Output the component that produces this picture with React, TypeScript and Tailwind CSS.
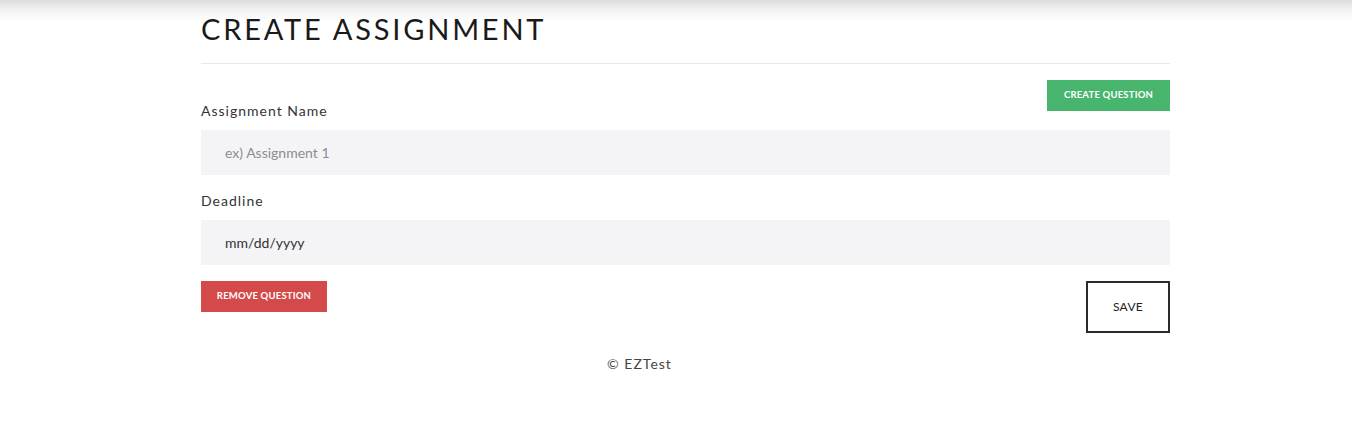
import React from "react";

export default function App() {
  return (
    <div
      className="min-h-[443px] w-full bg-[linear-gradient(to_bottom,#dcdcdc_0px,#f3f3f3_10px,#ffffff_22px)] text-[#1d1d1f]"
      style={{ fontFamily: "Lato, 'Open Sans', sans-serif" }}
    >
      <div className="ml-[201px] w-[969px] pt-[11px]">
        <h1 className="text-[29px] leading-[36px] font-normal tracking-[2.8px] text-[#1a1a1a] pb-[16px] border-b border-[#e9e9e9]">
          CREATE ASSIGNMENT
        </h1>
        <div className="flex justify-end pt-[16px]">
          <button className="h-[31px] w-[123px] bg-[#48b56e] text-white text-[9.5px] font-bold tracking-[0.2px]">
            CREATE QUESTION
          </button>
        </div>
        <div className="-mt-[10px]">
          <label className="block text-[14px] leading-[20px] tracking-[1px] text-[#333] mb-[9px]">
            Assignment Name
          </label>
          <input
            className="block h-[45px] w-full bg-[#f4f4f6] px-[24px] text-[14px] text-[#333] placeholder:text-[#8b8d91] outline-none"
            placeholder="ex) Assignment 1"
          />
        </div>
        <div className="mt-[16px]">
          <label className="block text-[14px] leading-[20px] tracking-[1px] text-[#333] mb-[9px]">
            Deadline
          </label>
          <div className="flex h-[45px] w-full items-center bg-[#f4f4f6] px-[24px] text-[14px] text-[#333]">
            mm/dd/yyyy
          </div>
        </div>
        <div className="mt-[16px] flex items-start justify-between">
          <button className="h-[31px] w-[126px] bg-[#d34a4a] text-white text-[9.5px] font-bold tracking-[0.2px]">
            REMOVE QUESTION
          </button>
          <button className="h-[52px] w-[84px] border-2 border-[#2b2b2b] bg-white text-[12px] text-[#222] tracking-[0.3px]">
            SAVE
          </button>
        </div>
        <div className="flex justify-center pr-[92px] pt-[20px] text-[14px] tracking-[1px] text-[#444]">
          © EZTest
        </div>
      </div>
    </div>
  );
}
